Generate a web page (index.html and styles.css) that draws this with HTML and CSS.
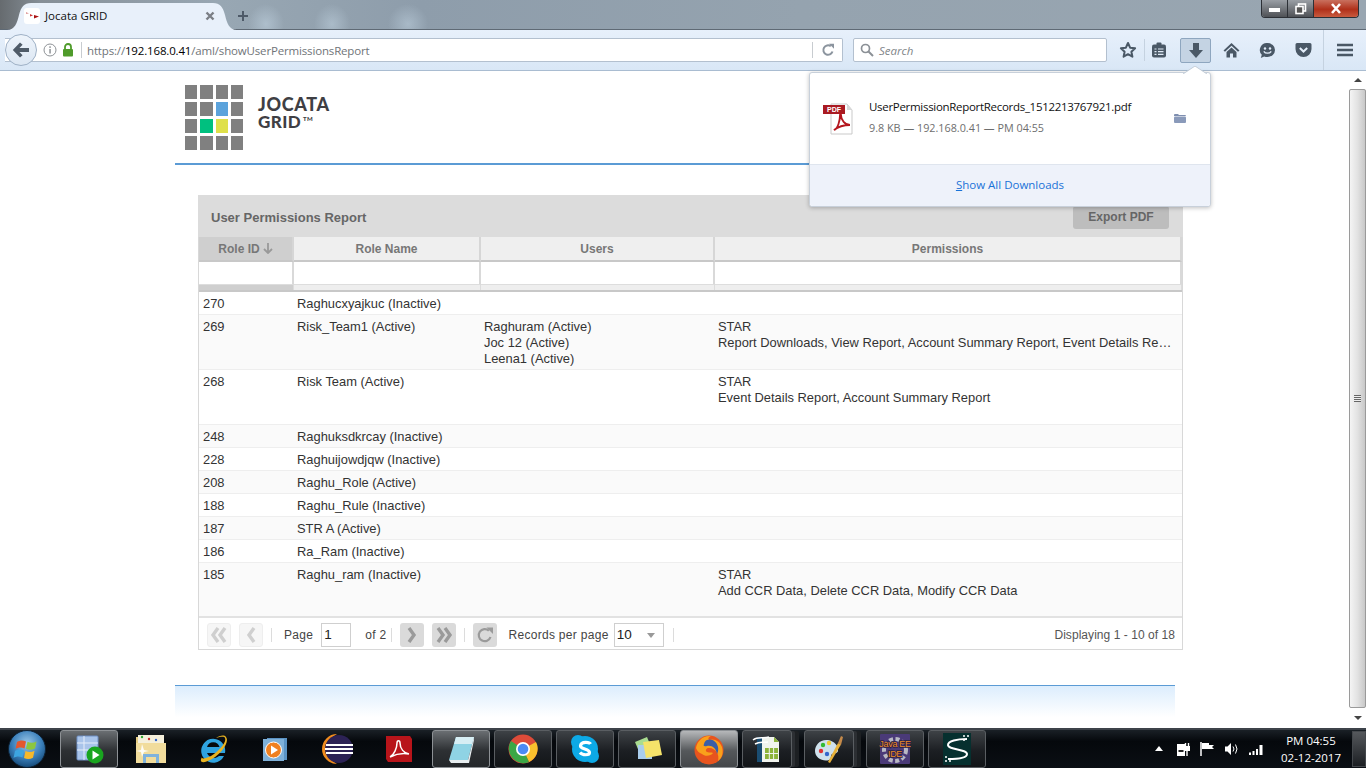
FILE: index.html
```html
<!DOCTYPE html>
<html lang="en">
<head>
<meta charset="utf-8">
<title>Jocata GRID</title>
<link rel="stylesheet" href="styles.css">
</head>
<body>
<div class="screen">
  <header class="tabstrip">
    <div class="tab">
      <span class="favicon"><svg width="16" height="16" viewBox="0 0 16 16"><path d="M2 4l3 1.500-3 .5z" fill="#d99"/><path d="M6 6l3 1.500-3 1z" fill="#c33"/><path d="M10 7l5 1.500-5 2z" fill="#a11"/></svg></span>
      <span class="tab-title">Jocata GRID</span>
      <svg class="tab-close" width="10" height="10" viewBox="0 0 10 10"><path d="M1.500 1.500l7 7M8.500 1.500l-7 7" stroke="#7b7f85" stroke-width="2.400"/></svg>
    </div>
    <svg class="newtab" width="12" height="12" viewBox="0 0 12 12"><path d="M6 1v10M1 6h10" stroke="#4e5a68" stroke-width="2"/></svg>
    <div class="winctl">
      <span class="win-btn"><svg width="14" height="8" viewBox="0 0 14 8"><rect x="1" y="3" width="11" height="4" fill="#fff"/></svg></span>
      <span class="win-btn"><svg width="14" height="12" viewBox="0 0 14 12"><rect x="4.500" y="1" width="7" height="7" fill="none" stroke="#fff" stroke-width="1.600"/><rect x="2" y="3.500" width="7" height="7" fill="#555" stroke="#fff" stroke-width="1.600"/></svg></span>
      <span class="win-btn win-close"><svg width="14" height="11" viewBox="0 0 14 11"><path d="M3 1l8 9M11 1l-8 9" stroke="#fff" stroke-width="2.600"/></svg></span>
    </div>
  </header>

  <nav class="toolbar">
    <div class="urlbar">
      <span class="back"><svg width="18" height="16" viewBox="0 0 18 16"><path d="M8 .5L.8 8 8 15.500l2.600-2.300L7.400 10H17V6H7.400l3.200-3.200z" fill="#4f5b68"/></svg></span>
      <svg class="info" width="14" height="14" viewBox="0 0 14 14"><circle cx="7" cy="7" r="6" fill="none" stroke="#8e9296"/><rect x="6.300" y="6" width="1.500" height="4.500" fill="#8e9296"/><rect x="6.300" y="3.300" width="1.500" height="1.600" fill="#8e9296"/></svg>
      <svg class="lock" width="12" height="14" viewBox="0 0 12 14"><rect x="1" y="6" width="10" height="7.500" rx="1" fill="#4f9b2a"/><path d="M3 6.500V4a3 3 0 0 1 6 0v2.500" fill="none" stroke="#4f9b2a" stroke-width="1.800"/></svg>
      <span class="url"><span class="url-dim">https://</span>192.168.0.41<span class="url-dim">/aml/showUserPermissionsReport</span></span>
      <span class="reload"><svg width="14" height="14" viewBox="0 0 14 14"><path d="M11.500 8.500A4.700 4.700 0 1 1 9.800 3.200" fill="none" stroke="#8b949e" stroke-width="2"/><path d="M8 .8h5v5z" fill="#8b949e"/></svg></span>
    </div>
    <div class="searchbar">
      <svg width="14" height="14" viewBox="0 0 14 14"><circle cx="5.500" cy="5.500" r="4" fill="none" stroke="#8b9096" stroke-width="1.700"/><path d="M8.500 8.500l4.500 4.500" stroke="#8b9096" stroke-width="2"/></svg>
      <span>Search</span>
    </div>
    <div class="tools">
      <span class="tool tool-star"><svg width="18" height="18" viewBox="0 0 18 18"><path d="M9 2l2.100 4.700 5 .6-3.700 3.400 1 5L9 13.200l-4.400 2.500 1-5L1.900 7.300l5-.6z" fill="none" stroke="#4a5866" stroke-width="2" stroke-linejoin="round"/></svg></span>
      <span class="tool-sep"></span>
      <span class="tool tool-list"><svg width="16" height="16" viewBox="0 0 16 16"><rect x="1" y="2.500" width="14" height="13" rx="2" fill="#4a5866"/><rect x="5.500" y="0.500" width="5" height="3" rx="1" fill="#4a5866"/><path d="M3.500 7h2M7 7h5.500M3.500 9.700h2M7 9.700h5.500M3.500 12.400h2M7 12.400h5.500" stroke="#dfe9f5" stroke-width="1.200"/></svg></span>
      <span class="tool tool-dl"><svg width="16" height="17" viewBox="0 0 16 17"><path d="M5 1h6v7h4l-7 8-7-8h4z" fill="#4a5866"/></svg></span>
      <span class="tool tool-home"><svg width="17" height="16" viewBox="0 0 17 16"><path d="M8.500 1L.5 8.500l1.500 1.300 6.500-6 6.500 6 1.500-1.300z" fill="#4a5866"/><path d="M3.500 10l5-4.500 5 4.500v5.500h-3.500v-4H7v4H3.500z" fill="#4a5866"/></svg></span>
      <span class="tool tool-smile"><svg width="17" height="17" viewBox="0 0 17 17"><path d="M8.500 1a7.500 7 0 0 1 0 14c-1.200 0-2.300-.2-3.300-.6L1.800 16l1-3.200A7 7 0 0 1 8.500 1z" fill="#4a5866"/><circle cx="6" cy="6.500" r="1.200" fill="#e4eefa"/><circle cx="11" cy="6.500" r="1.200" fill="#e4eefa"/><path d="M4.800 9.300c1.600 2.500 5.800 2.500 7.400 0" fill="none" stroke="#e4eefa" stroke-width="1.300"/></svg></span>
      <span class="tool tool-pocket"><svg width="17" height="16" viewBox="0 0 17 16"><path d="M2 1h13a1.500 1.500 0 0 1 1.500 1.500V7a8 8 0 0 1-16 0V2.500A1.500 1.500 0 0 1 2 1z" fill="#4a5866"/><path d="M4.800 6l3.700 3.500L12.200 6" fill="none" stroke="#e4eefa" stroke-width="2"/></svg></span>
      <span class="tool-sep tool-sep-b"></span>
      <span class="tool tool-menu"><svg width="16" height="14" viewBox="0 0 16 14"><path d="M0 2h16M0 7h16M0 12h16" stroke="#4a5866" stroke-width="2.400"/></svg></span>
    </div>
  </nav>

  <div class="viewport">
    <main class="page">
      <div class="brand">
        <div class="logo-grid">
          <i></i><i></i><i></i><i></i>
          <i></i><i></i><i class="c-blue"></i><i></i>
          <i></i><i class="c-green"></i><i class="c-yellow"></i><i></i>
          <i></i><i></i><i></i><i></i>
        </div>
        <div class="logo-text"><div>JOCATA</div><div class="logo-sub">GRID<sup>TM</sup></div></div>
      </div>

      <section class="report">
        <div class="report-head">
          <span class="report-title">User Permissions Report</span>
          <span class="export">Export PDF</span>
        </div>
        <div class="grid-row head-grid col-heads">
          <div class="ch ch-sorted">Role ID <svg width="10" height="11" viewBox="0 0 10 11"><path d="M5 0v10M1 6l4 4 4-4" fill="none" stroke="#999" stroke-width="1.800"/></svg></div>
          <div class="ch">Role Name</div>
          <div class="ch">Users</div>
          <div class="ch">Permissions</div>
        </div>
        <div class="grid-row head-grid filters">
          <div class="fcell"></div><div class="fcell"></div><div class="fcell"></div><div class="fcell"></div>
        </div>
        <div class="grid-row head-grid filter-foot">
          <div class="ffoot ffoot-s"></div><div class="ffoot"></div><div class="ffoot"></div><div class="ffoot"></div>
        </div>

        <div class="grid-row row"><div>270</div><div>Raghucxyajkuc (Inactive)</div><div></div><div></div></div>
        <div class="grid-row row alt tall"><div>269</div><div>Risk_Team1 (Active)</div><div>Raghuram (Active)<br>Joc 12 (Active)<br>Leena1 (Active)</div><div class="perm"><div>STAR</div><div class="clip">Report Downloads, View Report, Account Summary Report, Event Details Re…</div></div></div>
        <div class="grid-row row tall"><div>268</div><div>Risk Team (Active)</div><div></div><div class="perm"><div>STAR</div><div class="clip">Event Details Report, Account Summary Report</div></div></div>
        <div class="grid-row row alt"><div>248</div><div>Raghuksdkrcay (Inactive)</div><div></div><div></div></div>
        <div class="grid-row row"><div>228</div><div>Raghuijowdjqw (Inactive)</div><div></div><div></div></div>
        <div class="grid-row row alt"><div>208</div><div>Raghu_Role (Active)</div><div></div><div></div></div>
        <div class="grid-row row"><div>188</div><div>Raghu_Rule (Inactive)</div><div></div><div></div></div>
        <div class="grid-row row alt"><div>187</div><div>STR A (Active)</div><div></div><div></div></div>
        <div class="grid-row row"><div>186</div><div>Ra_Ram (Inactive)</div><div></div><div></div></div>
        <div class="grid-row row alt tall last"><div>185</div><div>Raghu_ram (Inactive)</div><div></div><div class="perm"><div>STAR</div><div class="clip">Add CCR Data, Delete CCR Data, Modify CCR Data</div></div></div>

        <div class="pager">
          <span class="pbtn off"><svg width="18" height="16" viewBox="0 0 18 16"><path d="M8 1L3 8l5 7M15 1l-5 7 5 7" fill="none" stroke="#cfcfcf" stroke-width="3.400"/></svg></span>
          <span class="pbtn off"><svg width="12" height="16" viewBox="0 0 12 16"><path d="M9 1L4 8l5 7" fill="none" stroke="#cfcfcf" stroke-width="3.400"/></svg></span>
          <span class="psep"></span>
          <span class="plabel plabel-page">Page</span>
          <span class="pinput">1</span>
          <span class="plabel plabel-of">of 2</span>
          <span class="psep psep-tight"></span>
          <span class="pbtn on"><svg width="12" height="16" viewBox="0 0 12 16"><path d="M3 1l5 7-5 7" fill="none" stroke="#9a9a9a" stroke-width="3.400"/></svg></span>
          <span class="pbtn on"><svg width="18" height="16" viewBox="0 0 18 16"><path d="M3 1l5 7-5 7M10 1l5 7-5 7" fill="none" stroke="#9a9a9a" stroke-width="3.400"/></svg></span>
          <span class="psep psep-b"></span>
          <span class="pbtn on"><svg width="18" height="18" viewBox="0 0 18 18"><path d="M14.500 11a6 6 0 1 1-1.600-6.200" fill="none" stroke="#9a9a9a" stroke-width="2.200"/><path d="M10.500 1.500h6.500v6.500z" fill="#9a9a9a"/></svg></span>
          <span class="plabel plabel-rec">Records per page</span>
          <span class="pselect">10<i class="caret"></i></span>
          <span class="psep"></span>
          <span class="pdisplay">Displaying 1 - 10 of 18</span>
        </div>
      </section>

      <div class="page-foot"></div>
    </main>
    <aside class="scrollbar">
      <span class="sb-arrow"><i class="sb-up"></i></span>
      <span class="sb-thumb"><i></i></span>
      <span class="sb-arrow sb-arrow-b"><i class="sb-down"></i></span>
    </aside>
  </div>

  <footer class="taskbar">
    <span class="start"><svg width="40" height="38" viewBox="0 0 40 38"><defs><radialGradient id="orb" cx="50%" cy="35%" r="65%"><stop offset="0" stop-color="#9cc8e8"/><stop offset=".6" stop-color="#3b80bb"/><stop offset="1" stop-color="#164a78"/></radialGradient></defs><circle cx="20" cy="19" r="18.500" fill="url(#orb)" stroke="#0d2236"/><path d="M10 12c3-2 6-2 9-.5l-1.500 7c-3-1.500-6-1.500-9 .5z" fill="#e4572e"/><path d="M20.500 11.800c3 1.400 6 1.400 9-.3l-1.500 7c-3 1.700-6 1.700-9 .3z" fill="#8cc63f"/><path d="M8 21c3-2 6-2 9-.5l-1.500 7c-3-1.500-6-1.500-9 .5z" fill="#3da5e0"/><path d="M18.500 21c3 1.400 6 1.400 9-.3l-1.500 7c-3 1.700-6 1.700-9 .3z" fill="#f6b92b"/></svg></span>
    <span class="task active"><svg width="30" height="30" viewBox="0 0 30 30"><rect x="3" y="2" width="21" height="24" rx="1" fill="#a9c4ea" stroke="#6f8fc4"/><path d="M3 9h21M3 16h21M10 2v24" stroke="#e6eefa"/><circle cx="21" cy="21" r="8.500" fill="#19a51f"/><path d="M18.500 16.500l7 4.500-7 4.500z" fill="#fff"/></svg></span>
    <span class="task"><svg width="34" height="32" viewBox="0 0 34 32"><path d="M2 4h12l2 2h14v24H2z" fill="#e5cc82"/><rect x="4" y="2" width="26" height="8" fill="#f5f0dc"/><circle cx="8" cy="4" r="1.200" fill="#3a3"/><circle cx="15" cy="6" r="1.200" fill="#c33"/><circle cx="22" cy="7" r="1.200" fill="#36c"/><path d="M2 10h30v20H2z" fill="#f1dc9c"/><path d="M9 30v-9h16v9h-3v-6H12v6z" fill="#7fb2dc"/><path d="M8 11l2 6 5 1-5 1-2 5-1-5-5-1 5-1z" fill="#fff" opacity=".9"/></svg></span>
    <span class="task"><svg width="32" height="32" viewBox="0 0 32 32"><path d="M28 20A12 12 0 1 0 27 23h-5a7.500 7.500 0 0 1-12-3zM10 14a6.500 6.500 0 0 1 12.500 0z" fill="#2fa3e0" fill-rule="evenodd"/><path d="M5 24C1 31 8 30 15 26 24 21 33 9 29 4c-2-3-7-1-10 1 4-1 8-2 9 0 2 4-6 13-14 18-6 3-10 3-9 1z" fill="#e9b320"/></svg></span>
    <span class="task"><svg width="28" height="28" viewBox="0 0 28 28"><rect x="6" y="3" width="20" height="22" fill="#5b93c4"/><rect x="2" y="4" width="21" height="22" fill="#7fb0d8"/><circle cx="12.500" cy="15" r="8" fill="#f08020" stroke="#fff" stroke-width="1"/><path d="M10 10.500l7 4.500-7 4.500z" fill="#fff"/></svg></span>
    <span class="task"><svg width="34" height="34" viewBox="0 0 34 34"><path d="M17 2A15 15 0 0 0 17 32 17 17 0 0 1 17 2z" fill="#f08c1e"/><circle cx="19" cy="17" r="14" fill="#2c2255"/><path d="M6 13h27M5 17h28M6 21h27" stroke="#fff" stroke-width="1.800"/></svg></span>
    <span class="task"><svg width="30" height="30" viewBox="0 0 30 30"><path d="M2 2h24l2 3v23H4l-2-3z" fill="#b8141a"/><path d="M6 23c4-2 7-9 7-14 0-3 3-3 3 0 0 6 4 10 9 11-6-1-13 0-19 3z" fill="none" stroke="#fff" stroke-width="1.500"/></svg></span>
    <span class="task active"><svg width="30" height="30" viewBox="0 0 30 30"><path d="M10 3h18l-6 23H3z" fill="#8fd3e4"/><path d="M10 3h18l-2 7H8z" fill="#d7eef4"/><path d="M3 26h19l6-23v3l-5 23H5z" fill="#e8eef0"/></svg></span>
    <span class="task"><svg width="30" height="30" viewBox="0 0 30 30"><circle cx="15" cy="15" r="14.500" fill="#dd4b39"/><path d="M15 15L28 8a14.500 14.500 0 0 1-7 20z" fill="#fbc02d"/><path d="M15 15l6 13A14.500 14.500 0 0 1 3 7z" fill="#3ba746"/><circle cx="15" cy="15" r="7" fill="#fff"/><circle cx="15" cy="15" r="5.300" fill="#4c8bf5"/></svg></span>
    <span class="task"><svg width="30" height="30" viewBox="0 0 30 30"><circle cx="15" cy="15" r="13" fill="#0da9e6"/><circle cx="8" cy="8" r="7" fill="#0da9e6"/><circle cx="22" cy="22" r="7" fill="#0da9e6"/><path d="M20.500 10c-1-2-9-3-10 1.500-.8 4 9 3 9 7 0 3-7 3-9.500 0" fill="none" stroke="#fff" stroke-width="3.200"/></svg></span>
    <span class="task"><svg width="32" height="28" viewBox="0 0 32 28"><path d="M4 7l12-5 5 12-12 5z" fill="#a9dc90"/><path d="M7 10h14v14H7z" fill="#a9cdec"/><path d="M12 7l16-2 3 15-16 3z" fill="#f5e36a"/></svg></span>
    <span class="task active ff"><svg width="32" height="32" viewBox="0 0 32 32"><circle cx="16" cy="17" r="14.500" fill="#e8541e"/><path d="M3 15C4 8 10 2 18 3c-3 1-3 3-2 4 5-2 11 1 13 7 2 7-1 12-4 14 2-7-3-14-10-13-2 .5-3 3-1 4 3 1 4 0 6 1-2 3-8 4-11 1-3-1-5-3-6-6z" fill="#f9a01b"/><path d="M14 7c5-2 10 2 11 7 .5 3 0 5-1 7-1-6-5-9-10-8-3 .5-4 0-3-2 .5-2 1.500-3.500 3-4z" fill="#3a5ea8"/></svg></span>
    <span class="task stack"><svg width="30" height="30" viewBox="0 0 30 30"><rect x="5" y="3" width="5" height="25" fill="#1a4d72"/><path d="M10 3h12l5 5v20H10z" fill="#f1f4ee"/><path d="M22 3l5 5h-5z" fill="#8cb33a"/><rect x="13" y="14" width="13" height="11" fill="#8cb33a"/><path d="M17.300 14v11M21.600 14v11M13 19.500h13" stroke="#f1f4ee"/><path d="M1 6c5-4 10-1 16-3M3 10c5-3 8-1 13-2" fill="none" stroke="#fff" stroke-width="1.500"/></svg></span>
    <span class="task stack"><svg width="32" height="30" viewBox="0 0 32 30"><path d="M15 6C7 5 2 11 2 17c0 7 8 11 14 9 3-1 1-4 3-6 2-1 5 0 6-3 1-5-4-10-10-11z" fill="#cfe1ec"/><circle cx="8" cy="17" r="2.200" fill="#d33"/><circle cx="10" cy="11" r="2.200" fill="#3b3"/><circle cx="16" cy="9" r="2.200" fill="#ec3"/><circle cx="14" cy="20" r="2.200" fill="#36c"/><path d="M15 28L25 9l3 1.500L17 29z" fill="#e8b23a"/><path d="M25 9l3-7 2 1-2 8z" fill="#c58a4a"/></svg></span>
    <span class="task"><svg class="jee" width="32" height="32" viewBox="0 0 32 32"><rect x="1" y="1" width="30" height="30" rx="1" fill="#4a3a78"/><circle cx="16" cy="17" r="11" fill="none" stroke="#b9b9c4" stroke-width="4" stroke-dasharray="4 2.500"/><text x="16" y="14" class="jee-t">Java EE</text><text x="16" y="24" class="jee-t">IDE</text></svg></span>
    <span class="task"><svg width="30" height="34" viewBox="0 0 30 34"><rect x="1" y="1" width="28" height="32" fill="#06302f"/><path d="M25 7C15 7 6 9 6 13c0 5 19 4 19 9 0 4-9 5-19 5" fill="none" stroke="#fff" stroke-width="2"/><path d="M21 4h2M25 4h2M21 8h2M3 29h2M7 29h2M3 25h2" stroke="#fff" stroke-width="1.600"/></svg></span>
    <div class="tray">
      <svg class="tray-up" width="10" height="6" viewBox="0 0 10 6"><path d="M5 0l4 5H1z" fill="#fff"/></svg>
      <svg class="tray-power" width="15" height="16" viewBox="0 0 15 16"><rect x="1" y="3" width="8" height="12" fill="#fff"/><rect x="2.500" y="9" width="5" height="2" fill="#222"/><rect x="8" y="5" width="6" height="5" fill="#fff"/><path d="M9.500 2v3M12.500 2v3M11 10v5" stroke="#fff" stroke-width="1.400"/></svg>
      <svg class="tray-flag" width="15" height="16" viewBox="0 0 15 16"><path d="M1 1v14" stroke="#fff" stroke-width="1.500"/><path d="M2 2h7v6H2zM9 4h5l-2 2 2 2H9z" fill="#fff"/></svg>
      <svg class="tray-vol" width="16" height="14" viewBox="0 0 16 14"><path d="M1 4.500h2.500L7 1v12L3.500 9.500H1z" fill="#fff"/><path d="M9 4.500q2 2.500 0 5M11.500 2.500q3 4.500 0 9" fill="none" stroke="#fff" stroke-width="1"/></svg>
      <svg class="tray-net" width="16" height="11" viewBox="0 0 16 11"><path d="M1 8.500h2V11H1zM4.500 7h2v4h-2zM8 5h2v6H8zM11.500 1h3v10h-3z" fill="#fff"/></svg>
      <div class="clock"><div>PM 04:55</div><div>02-12-2017</div></div>
      <span class="show-desktop"></span>
    </div>
  </footer>

  <div class="dl-popup">
    <svg class="dl-arrow" width="24" height="8" viewBox="0 0 24 8"><path d="M0 8L12 0l12 8z" fill="#fff"/><path d="M0 8L12 0l12 8" fill="none" stroke="#c4cdd8"/></svg>
    <div class="dl-item">
      <svg class="pdf-icon" width="32" height="32" viewBox="0 0 32 32"><path d="M9 1h16l5 6v24H9z" fill="#fff" stroke="#c9c9c9"/><path d="M25 1v6h5z" fill="#d8d8d8"/><rect x="1" y="2" width="22" height="9" fill="#a91a22"/><text x="12" y="9.200" class="pdf-t">PDF</text><path d="M12 27c4-1 6-10 6-15 0-2 1-2 1 0 0 5 4 10 9 10-5 0-11 1-16 5z" fill="none" stroke="#b4161e" stroke-width="1.800"/></svg>
      <div class="dl-text">
        <div class="dl-name">UserPermissionReportRecords_1512213767921.pdf</div>
        <div class="dl-meta">9.8 KB — 192.168.0.41 — PM 04:55</div>
      </div>
      <svg class="dl-folder" width="12" height="10" viewBox="0 0 12 10"><path d="M0 2a1 1 0 0 1 1-1h3l1 1h6a1 1 0 0 1 1 1H0z" fill="#7f8fb0"/><rect y="3.500" width="12" height="6.500" rx="1" fill="#8a9aba"/></svg>
    </div>
    <div class="dl-foot"><span><u>S</u>how All Downloads</span></div>
  </div>
</div>
</body>
</html>
```
FILE: styles.css
```css
* { box-sizing: border-box; }
html, body { margin: 0; padding: 0; height: 100%; overflow: hidden; background: #fff; }
.screen { position: relative; width: 1366px; height: 768px; display: flex; flex-direction: column; overflow: hidden; font-family: "Liberation Sans", Arial, sans-serif; font-size: 12px; color: #333; }

/* tab strip */
.tabstrip { height: 30px; display: flex; align-items: flex-end; padding-left: 7px; background:
  radial-gradient(ellipse 18px 20px at 266px 24px, rgba(190,208,222,.6), transparent),
  radial-gradient(ellipse 18px 20px at 332px 24px, rgba(190,208,222,.55), transparent),
  radial-gradient(ellipse 20px 20px at 408px 24px, rgba(190,208,222,.55), transparent),
  linear-gradient(90deg, #666b6f 0, #868f97 40px, #98a7b3 220px, #8e9dab 420px, #95a3af 800px, #99a6b1 1366px); border-bottom: 1px solid #5f6a75; }
.tab { width: 230px; height: 27px; margin-bottom: -1px; padding: 0 0 2px 17px; display: flex; align-items: center; background: #e8f0fa; clip-path: path("M0 27 C8 27 10 20 12 12 C14 4 17 0 24 0 L206 0 C213 0 216 4 218 12 C220 20 222 27 230 27 Z"); }
.favicon { width: 16px; height: 16px; background: #fff; border-radius: 3px; display: block; }
.favicon svg { display: block; }
.tab-title { margin-left: 5px; font: 11.500px "Open Sans", sans-serif; color: #111; flex: 1; }
.tab-close { margin-right: 22px; }
.newtab { margin: 0 0 7px 0; }
.winctl { margin-left: auto; margin-right: 7px; align-self: flex-start; display: flex; height: 18px; border: 1px solid #2c3036; border-top: 0; border-radius: 0 0 4px 4px; overflow: hidden; }
.win-btn { width: 26px; display: flex; align-items: center; justify-content: center; background: linear-gradient(#9a9fa5, #4e5156); border-right: 1px solid #2c3036; }
.win-close { width: 44px; border-right: 0; background: linear-gradient(#c9705e, #b0301a 55%, #c85a3e); }

/* toolbar */
.toolbar { height: 41px; display: flex; align-items: center; background: linear-gradient(#e7f0fb, #d9e7f6); border-bottom: 1px solid #a9bcd1; padding-left: 5px; }
.urlbar { position: relative; width: 838px; height: 24px; display: flex; align-items: center; background: #fff; border: 1px solid #b3c0cf; border-left: 0; border-radius: 0 2px 2px 0; }
.back { position: relative; width: 32px; height: 32px; flex: none; border-radius: 50%; background: linear-gradient(#eef4fb, #dce7f3); border: 1px solid #9fb1c6; display: flex; align-items: center; justify-content: center; }
.info { margin-left: 6px; }
.lock { margin-left: 5px; }
.url { margin-left: 7px; padding-left: 5px; border-left: 1px solid #c8ccd0; height: 16px; font: 11.500px/17px "Open Sans", sans-serif; letter-spacing: -.16px; color: #000; flex: 1; }
.url-dim { color: #707478; }
.reload { width: 30px; height: 16px; border-left: 1px solid #c8ccd0; display: flex; align-items: center; justify-content: center; }
.searchbar { width: 254px; height: 24px; margin-left: 10px; padding-left: 6px; display: flex; align-items: center; gap: 5px; background: #fff; border: 1px solid #b3c0cf; border-radius: 2px; font: italic 11.500px "Open Sans", sans-serif; color: #7f8589; }
.tools { display: flex; align-items: center; flex: 1; height: 100%; }
.tool { display: flex; align-items: center; justify-content: center; }
.tool-star { width: 18px; margin-left: 12px; }
.tool-sep { width: 1px; height: 22px; background: #c5d2e0; margin-left: 7px; }
.tool-list { width: 16px; margin-left: 6px; }
.tool-dl { width: 31px; height: 25px; margin-left: 13px; background: #c4d3e3; border: 1px solid #8ea6bf; border-radius: 2px; }
.tool-home { width: 17px; margin-left: 12px; }
.tool-smile { width: 17px; margin-left: 19px; }
.tool-pocket { width: 17px; margin-left: 19px; }
.tool-sep-b { height: 40px; margin-left: 11px; }
.tool-menu { width: 16px; margin-left: 13px; }

/* page area */
.viewport { height: 657px; display: flex; background: #fff; }
.page { flex: 1; min-width: 0; padding-left: 175px; padding-right: 174px; }
.brand { height: 94px; padding: 14px 0 0 10px; display: flex; border-bottom: 2px solid #5b9bd5; }
.logo-grid { display: grid; grid-template-columns: repeat(4, 12.250px); grid-auto-rows: 13.500px; gap: 3.500px 3px; width: 58px; height: 64px; }
.logo-grid i { background: #808080; }
.logo-grid .c-blue { background: #5ba3dc; }
.logo-grid .c-green { background: #00c07f; }
.logo-grid .c-yellow { background: #dfe04a; }
.logo-text { margin: 10px 0 0 15px; font: 900 18px/18px Lato, sans-serif; letter-spacing: .65px; color: #3f3f44; }
.logo-sub { font-size: 17px; letter-spacing: .4px; }
.logo-sub sup { font-size: 6px; line-height: 0; vertical-align: 7px; margin-left: 2px; }

.report { width: 985px; margin: 30px 0 0 23px; border: 1px solid #d8d8d8; border-top: 0; }
.report-head { height: 42px; margin: 0 -1px; background: #dcdcdc; display: flex; align-items: center; justify-content: space-between; padding: 0 14px 0 13px; }
.report-title { margin-top: 2px; font-size: 13px; font-weight: 700; color: #666; }
.export { width: 96px; height: 23px; margin-top: 2px; background: #bdbdbd; border-radius: 3px; color: #666; font-size: 12px; font-weight: 700; display: flex; align-items: center; justify-content: center; }
.grid-row { display: grid; grid-template-columns: 94px 187px 234px 468px; }
.head-grid { grid-template-columns: 95px 187px 234px 467px; }
.col-heads { height: 25px; }
.ch { background: #efefef; border-right: 2px solid #d6d6d6; border-bottom: 2px solid #c8c8c8; display: flex; align-items: center; justify-content: center; gap: 3px; font-weight: 700; color: #777; }
.ch-sorted { background: #cfcfcf; }
.filters { height: 23px; }
.fcell { background: #fff; border-right: 2px solid #d9d9d9; border-bottom: 1px solid #dddddd; }
.filter-foot { height: 7px; border-bottom: 2px solid #c8c8c8; }
.ffoot { background: #eeeeee; border-right: 1px solid #dcdcdc; }
.ffoot-s { background: #cfcfcf; }

.row { height: 23px; color: #333; font-size: 12.900px; line-height: 16px; border-bottom: 1px solid #eeeeee; }
.row > div { padding: 4px 4px 0; min-width: 0; }
.row.alt { background: #fafafa; }
.row.tall { height: 55px; }
.row.last { border-bottom: 2px solid #e2e2e2; }
.clip { white-space: nowrap; }

.pager { height: 31px; display: flex; align-items: center; padding: 2px 7px 0 8px; color: #444; font-size: 12px; }
.pbtn { width: 24px; height: 24px; margin-right: 8px; border-radius: 3px; display: flex; align-items: center; justify-content: center; flex: none; }
.pbtn.off { background: #f6f6f6; border: 1px solid #eeeeee; }
.pbtn.on { background: #dadada; }
.psep { width: 1px; height: 14px; background: #dcdcdc; margin: 0 12px 0 0; flex: none; }
.psep-tight { margin: 0 8px 0 5px; }
.psep-b { margin-right: 8px; }
.plabel { letter-spacing: .3px; }
.pinput { width: 30px; height: 24px; margin: 0 14px 0 8px; border: 1px solid #cfcfcf; padding: 3px 2px; font-size: 13.500px; line-height: 16px; color: #222; background: #fff; }
.plabel-rec { margin: 0 5px 0 3px; }
.pselect { position: relative; width: 50px; height: 24px; margin-right: 9px; border: 1px solid #cfcfcf; padding: 3px 2px; font-size: 13.500px; line-height: 16px; color: #222; }
.caret { position: absolute; right: 8px; top: 9px; border: 4px solid transparent; border-top: 5px solid #999; border-bottom: 0; }
.pdisplay { margin-left: auto; color: #555; letter-spacing: .05px; }

.page-foot { height: 40px; margin-top: 35px; border-top: 1px solid #5b9bd5; background: linear-gradient(#dcedfd, #fff 80%); }

/* scrollbar */
.scrollbar { width: 17px; flex: none; display: flex; flex-direction: column; background: #f4f4f4; }
.sb-arrow { height: 18px; flex: none; display: flex; align-items: center; justify-content: center; background: #fff; }
.sb-arrow-b { height: 20px; }
.sb-up { border: 4px solid transparent; border-bottom: 4px solid #444; border-top: 0; }
.sb-down { border: 4px solid transparent; border-top: 4px solid #444; border-bottom: 0; }
.sb-thumb { flex: 1; border: 1px solid #9a9a9a; border-radius: 2px; background: linear-gradient(90deg, #f4f4f4, #e2e2e2 50%, #c8c8c8); display: flex; align-items: center; justify-content: center; }
.sb-thumb i { width: 7px; height: 7px; background: repeating-linear-gradient(#666 0 1px, #eee 1px 2px); }

/* taskbar */
.taskbar { height: 40px; display: flex; align-items: center; background: linear-gradient(#1a2026, #05080c 30%, #0b0f14); border-top: 2px solid #3d434a; position: relative; color: #fff; }
.start { width: 54px; display: flex; justify-content: center; margin-right: 6px; flex: none; }
.task { width: 58px; height: 38px; margin-right: 4px; display: flex; align-items: center; justify-content: center; flex: none; background: linear-gradient(#3e4246, #1c1f23 55%, #121518); border: 1px solid #5a5e62; border-radius: 3px; }
.task:nth-of-type(n+3):nth-of-type(-n+7) { background: transparent; border-color: transparent; }
.task.active { background: linear-gradient(#6a6e72, #2d3033 55%, #24272a); border-color: #8d9195; }
.task.ff { background: linear-gradient(#b6b8ba, #55585b 55%, #44474a); }
.task.stack { width: 50px; box-shadow: 4px 0 0 -1px #2c2f33, 8px 0 0 -1px #1d2023; margin-right: 12px; }
.jee-t { font: 9px "Liberation Sans", sans-serif; letter-spacing: -.3px; fill: #ee8a2a; text-anchor: middle; paint-order: stroke; stroke: #2a2040; stroke-width: 1.500px; }
.tray { margin-left: auto; display: flex; align-items: center; height: 100%; }
.tray-up { margin-right: 11.500px; }
.tray-power { margin-right: 9px; }
.tray-flag { margin-right: 9.500px; }
.tray-vol { margin-right: 8px; }
.tray-net { margin-right: 11px; }
.clock { width: 72px; text-align: center; font: 11.500px/17px "Open Sans", sans-serif; color: #fff; }
.show-desktop { width: 14px; height: 36px; margin-left: 5px; background: linear-gradient(#55585c, #1c1f23); border: 1px solid #44484c; }

/* download popup */
.dl-popup { position: absolute; left: 809px; top: 72px; width: 402px; height: 135px; background: #fff; border: 1px solid #c8d0da; border-radius: 3px; box-shadow: 0 1px 4px rgba(0,0,0,.25); display: flex; flex-direction: column; }
.dl-arrow { position: absolute; left: 373px; top: -7px; }
.dl-item { height: 92px; display: flex; align-items: flex-start; border-bottom: 1px solid #dfe5ee; padding: 30px 0 0 12px; }
.pdf-icon { flex: none; }
.pdf-t { font: 700 7px "Liberation Sans", sans-serif; fill: #fff; text-anchor: middle; }
.dl-text { margin-left: 15px; margin-top: -5px; flex: 1; }
.dl-name { font: 11.500px/18px "Open Sans", sans-serif; letter-spacing: -.3px; color: #111; }
.dl-meta { font: 10.800px/18px "Open Sans", sans-serif; color: #6e6e6e; margin-top: 3px; }
.dl-folder { margin: 10px 24px 0 0; }
.dl-foot { flex: 1; padding-bottom: 2px; background: #eef2fa; border-radius: 0 0 3px 3px; display: flex; align-items: center; justify-content: center; font: 11.500px "Open Sans", sans-serif; color: #1a73d8; }
```
